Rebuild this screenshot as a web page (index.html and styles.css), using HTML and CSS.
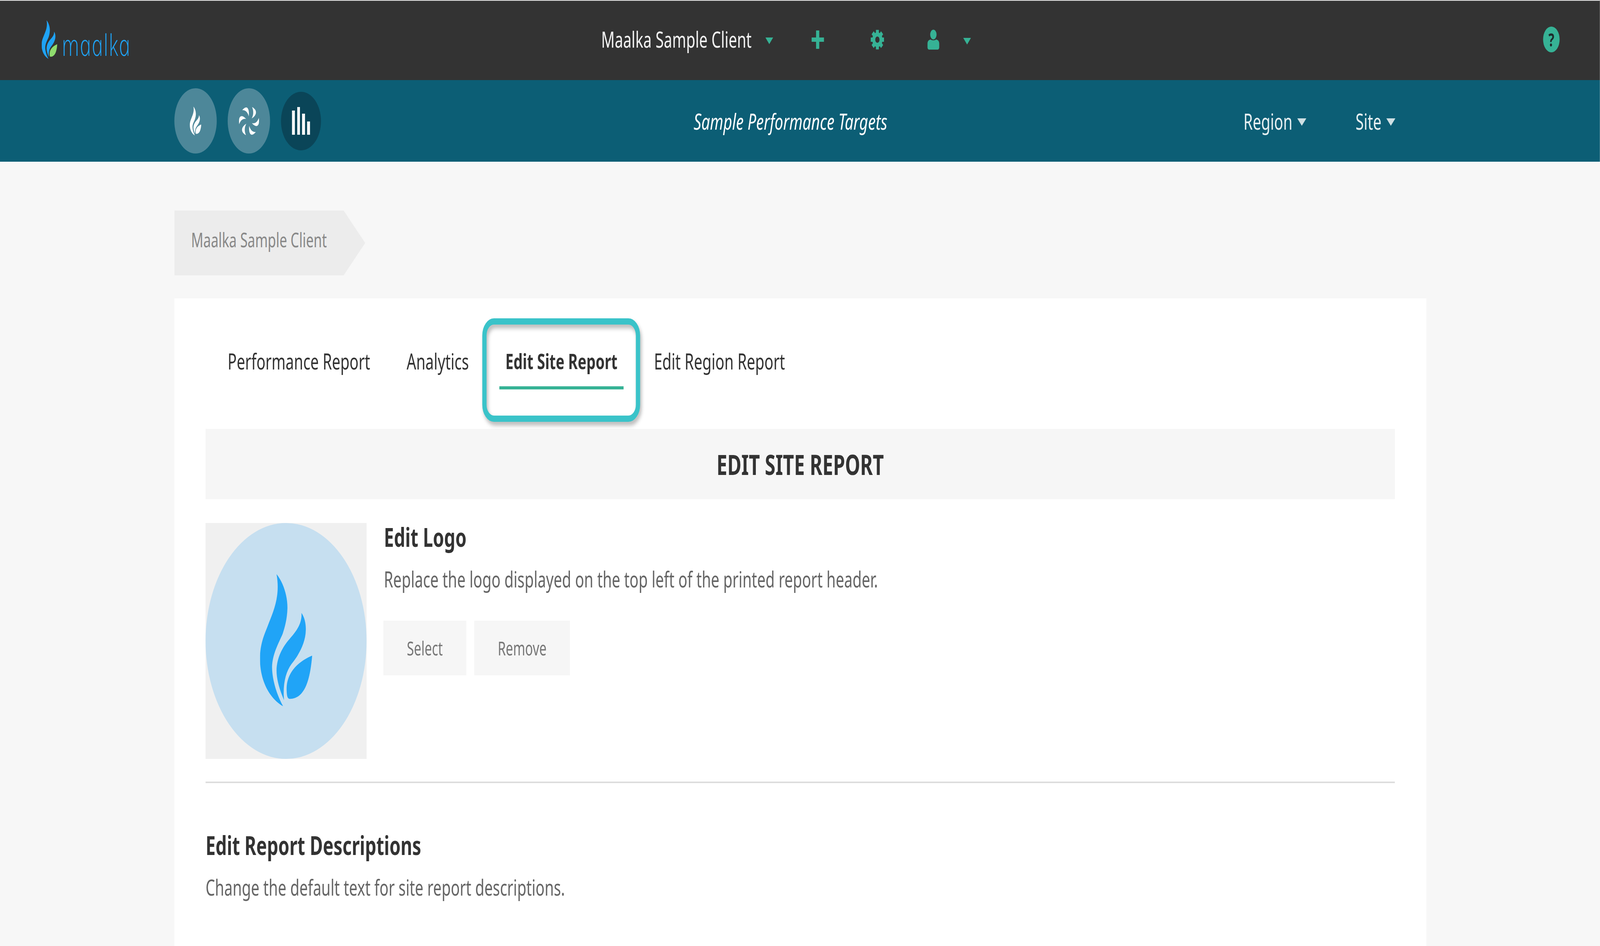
FILE: index.html
```html
<!DOCTYPE html>
<html lang="en">
<head>
<meta charset="utf-8">
<title>Edit Site Report</title>
<link rel="stylesheet" href="styles.css">
</head>
<body>
<svg class="defs" aria-hidden="true">
  <symbol id="flame" viewBox="533 393 384 759" preserveAspectRatio="none">
    <path d="M655 393C705 440 737 520 735 590C733 650 715 700 700 735C670 790 625 850 622 925C622 1000 660 1090 703 1150C620 1115 533 1020 533 875C535 790 565 740 590 690C630 610 685 520 655 393Z"/>
    <path d="M838 615C862 640 872 680 870 715C868 790 815 860 765 908C720 955 700 1030 710 1115C680 1060 655 1000 655 945C657 870 700 810 750 765C790 730 845 680 838 615Z"/>
    <path class="leaf" d="M917 860C905 960 880 1105 755 1108C735 1108 730 1095 729 1050C729 960 810 895 917 860Z"/>
  </symbol>
  <symbol id="caret" viewBox="0 0 30 18" preserveAspectRatio="none">
    <path d="M0 0H30L15 18Z"/>
  </symbol>
</svg>

<div class="frame">
<div class="app">
<header class="topbar">
  <a class="brand">
    <svg class="brand-flame"><use href="#flame"/></svg>
    <span class="brand-name">maalka</span>
  </a>
  <div class="client">
    <span class="client-name">Maalka Sample Client</span>
    <svg class="caret-green"><use href="#caret"/></svg>
  </div>
  <svg class="icon-plus" viewBox="0 0 47 47"><path d="M17 0H29V18H47V29H29V47H17V29H0V18H17Z"/></svg>
  <svg class="icon-gear" viewBox="-25 -25 50 50">
    <circle class="gear-ring" r="13.5"/>
    <g class="gear-teeth">
      <path d="M0-25V-16"/>
      <path d="M0-25V-16" transform="rotate(45)"/>
      <path d="M0-25V-16" transform="rotate(90)"/>
      <path d="M0-25V-16" transform="rotate(135)"/>
      <path d="M0-25V-16" transform="rotate(180)"/>
      <path d="M0-25V-16" transform="rotate(225)"/>
      <path d="M0-25V-16" transform="rotate(270)"/>
      <path d="M0-25V-16" transform="rotate(315)"/>
    </g>
  </svg>
  <svg class="icon-user" viewBox="0 0 46 51">
    <ellipse cx="23" cy="12.500" rx="12" ry="12.500"/>
    <path d="M13 25C16 28 30 28 33 25C40 26 45 29 45 36V45C45 49 42 51 38 51H8C4 51 1 49 1 45V36C1 29 6 26 13 25Z"/>
  </svg>
  <svg class="caret-green caret-user"><use href="#caret"/></svg>
  <span class="help">?</span>
</header>

<nav class="subbar">
  <a class="round round-fuel"><svg class="round-flame"><use href="#flame"/></svg></a>
  <a class="round round-fan">
    <svg class="fan" viewBox="-38 -38 76 76">
      <g>
        <path d="M11.500-36C22-32 27-27 26-21C25-15 18-10 10-6.700C16-14 19-24 11.500-36Z"/>
        <path d="M11.500-36C22-32 27-27 26-21C25-15 18-10 10-6.700C16-14 19-24 11.500-36Z" transform="rotate(60)"/>
        <path d="M11.500-36C22-32 27-27 26-21C25-15 18-10 10-6.700C16-14 19-24 11.500-36Z" transform="rotate(120)"/>
        <path d="M11.500-36C22-32 27-27 26-21C25-15 18-10 10-6.700C16-14 19-24 11.500-36Z" transform="rotate(180)"/>
        <path d="M11.500-36C22-32 27-27 26-21C25-15 18-10 10-6.700C16-14 19-24 11.500-36Z" transform="rotate(240)"/>
        <path d="M11.500-36C22-32 27-27 26-21C25-15 18-10 10-6.700C16-14 19-24 11.500-36Z" transform="rotate(300)"/>
      </g>
    </svg>
  </a>
  <a class="round round-active">
    <svg class="bars" viewBox="0 0 68 71">
      <rect x="0" y="9" width="11" height="62"/>
      <rect x="20" y="0" width="10" height="71"/>
      <rect x="38" y="17" width="11" height="54"/>
      <rect x="57" y="37" width="11" height="34"/>
    </svg>
  </a>
  <h1 class="report-title">Sample Performance Targets</h1>
  <a class="drop drop-region">Region<svg class="caret-light"><use href="#caret"/></svg></a>
  <a class="drop drop-site">Site<svg class="caret-light"><use href="#caret"/></svg></a>
</nav>

<main class="page">
  <div class="crumb">Maalka Sample Client</div>
  <section class="card">
    <ul class="tabs">
      <li class="tab">Performance Report</li>
      <li class="tab">Analytics</li>
      <li class="tab tab-active">Edit Site Report</li>
      <li class="tab">Edit Region Report</li>
    </ul>
    <h2 class="section-bar">EDIT SITE REPORT</h2>
    <div class="logo-row">
      <div class="logo-box">
        <div class="logo-disc"><svg class="logo-flame"><use href="#flame"/></svg></div>
      </div>
      <div class="logo-copy">
        <h3 class="heading">Edit Logo</h3>
        <p class="desc">Replace the logo displayed on the top left of the printed report header.</p>
        <div class="actions">
          <button class="btn btn-select">Select</button>
          <button class="btn btn-remove">Remove</button>
        </div>
      </div>
    </div>
    <hr class="rule">
    <h3 class="heading heading-second">Edit Report Descriptions</h3>
    <p class="desc">Change the default text for site report descriptions.</p>
  </section>
</main>
</div>
</div>
</body>
</html>
```
FILE: styles.css
```css
* { box-sizing: border-box; }
html, body { margin: 0; padding: 0; }
body {
  background: #f7f7f7;
  font-family: "Noto Sans", "Open Sans", sans-serif;
  color: #333;
}
.frame { width: 100%; height: 2422px; overflow: hidden; }
.app { width: 6001px; height: 2422px; transform-origin: 0 0; }
/* the sandbox window is narrower than the 6001px design: fit the width to it */
@media (max-width: 4096px) {
  .app { transform: scaleX(.6825); }
}
.defs { display: none; }
svg { display: block; fill: currentColor; }
.leaf { fill: var(--leaf, currentColor); }

/* top bar */
.topbar {
  height: 205px;
  background: #333;
  border-top: 2px solid #e4e4e4;
  display: flex;
  align-items: center;
  padding: 0 0 5px 156px;
  color: #36b295;
}
.brand { display: flex; align-items: flex-start; width: 2099px; height: 99px; color: #1fa3f5; --leaf: #8fdc6e; }
.brand-flame { width: 59px; height: 99px; flex: none; }
.brand-name {
  display: block;
  margin-left: 15px;
  margin-top: 12px;
  font-family: "Open Sans", sans-serif;
  font-style: italic;
  font-weight: 300;
  font-size: 76px;
  line-height: 100px;
  letter-spacing: 2.500px;
  transform: skewX(12deg);
}
.client { display: flex; align-items: center; margin-bottom: 2px; }
.client-name { color: #f2f2f2; font-size: 56px; line-height: 80px; white-space: nowrap; }
.caret-green { width: 29px; height: 17px; margin-left: 52px; margin-top: 9px; }
.icon-plus { width: 47px; height: 47px; margin-left: 144px; }
.icon-gear { width: 50px; height: 51px; margin-left: 175px; }
.gear-ring { fill: none; stroke: currentColor; stroke-width: 11px; }
.gear-teeth { fill: none; stroke: currentColor; stroke-width: 11px; }
.icon-user { width: 46px; height: 51px; margin-left: 162px; }
.caret-user { margin-left: 89px; }
.help {
  width: 62px;
  height: 66px;
  margin-left: auto;
  margin-right: 151px;
  border-radius: 50%;
  background: #36b295;
  color: #1d2b2b;
  font-weight: 700;
  font-size: 46px;
  line-height: 66px;
  text-align: center;
}

/* sub bar */
.subbar {
  height: 209px;
  background: #0c5e75;
  display: flex;
  align-items: center;
  padding-left: 654px;
  color: #fff;
}
.round {
  width: 159px;
  height: 167px;
  border-radius: 50%;
  background: #4d8799;
  display: flex;
  align-items: center;
  justify-content: center;
  margin-right: 41px;
}
.round-active { width: 150px; height: 150px; background: #0a4558; margin-right: 0; }
.round-flame { width: 43px; height: 74px; }
.fan { width: 76px; height: 76px; }
.bars { width: 68px; height: 71px; }
.report-title {
  margin: 0 0 0 1398px;
  width: 724px;
  font-size: 57px;
  line-height: 80px;
  font-style: italic;
  font-weight: 400;
  white-space: nowrap;
}
.drop { display: flex; align-items: center; font-size: 56px; line-height: 80px; color: #e6eff1; }
.drop-region { margin-left: 1338px; }
.drop-site { margin-left: 185px; }
.caret-light { width: 34px; height: 19px; margin-left: 18px; margin-top: 6px; fill: #cfe0e4; }

/* page */
.page { padding: 125px 0 0 654px; width: 5350px; }
.crumb {
  width: 716px;
  height: 166px;
  padding-left: 63px;
  background: #ececec;
  clip-path: polygon(0 0, 635px 0, 100% 50%, 635px 100%, 0 100%);
  color: #888;
  font-size: 50.500px;
  line-height: 150px;
}
.card { margin-top: 59px; padding: 119px 118px 0 117px; background: #fff; height: 1700px; }

/* tabs */
.tabs { list-style: none; margin: 0 0 0 60px; padding: 0; display: flex; gap: 91px; }
.tab {
  position: relative;
  padding: 0 23px 32px;
  font-size: 56px;
  line-height: 82px;
  color: #333;
  white-space: nowrap;
}
.tab-active { font-weight: 700; font-size: 54.500px; }
.tab-active::before {
  content: "";
  position: absolute;
  left: 0;
  right: 0;
  bottom: 0;
  height: 8px;
  background: #36b295;
}
.tab-active::after {
  content: "";
  position: absolute;
  left: -64px;
  right: -62px;
  top: -68px;
  bottom: -83px;
  border: 16px solid #3ac3c9;
  border-radius: 44px;
  filter: drop-shadow(5px 9px 6px rgba(0, 0, 0, .28));
}

/* section */
.section-bar {
  margin: 101px 0 0;
  height: 180px;
  background: #f6f6f6;
  font-size: 72px;
  line-height: 180px;
  font-weight: 700;
  text-align: center;
  color: #333;
}
.logo-row { display: flex; margin-top: 61px; }
.logo-box { width: 604px; height: 604px; background: #f0f0f0; flex: none; }
.logo-disc {
  width: 100%;
  height: 100%;
  border-radius: 50%;
  background: #c6dff0;
  display: flex;
  align-items: center;
  justify-content: center;
  color: #20a4f7;
}
.logo-flame { width: 196px; height: 339px; margin-top: -3px; }
.logo-copy { margin-left: 65px; }
.heading { margin: 0; font-size: 67px; line-height: 70px; font-weight: 700; color: #333; }
.heading-second { margin-top: 123px; }
.desc { margin: 43px 0 0; font-size: 56px; line-height: 60px; color: #666; }
.actions { display: flex; gap: 30px; margin-top: 77px; margin-left: -2px; }
.btn {
  height: 140px;
  border: 0;
  padding: 0;
  background: #f6f6f6;
  color: #777;
  font: 400 48.500px/140px "Noto Sans", sans-serif;
}
.btn-select { width: 311px; }
.btn-remove { width: 359px; }
.rule { margin: 58px 0 0; height: 4px; border: 0; background: #ddd; }
```
